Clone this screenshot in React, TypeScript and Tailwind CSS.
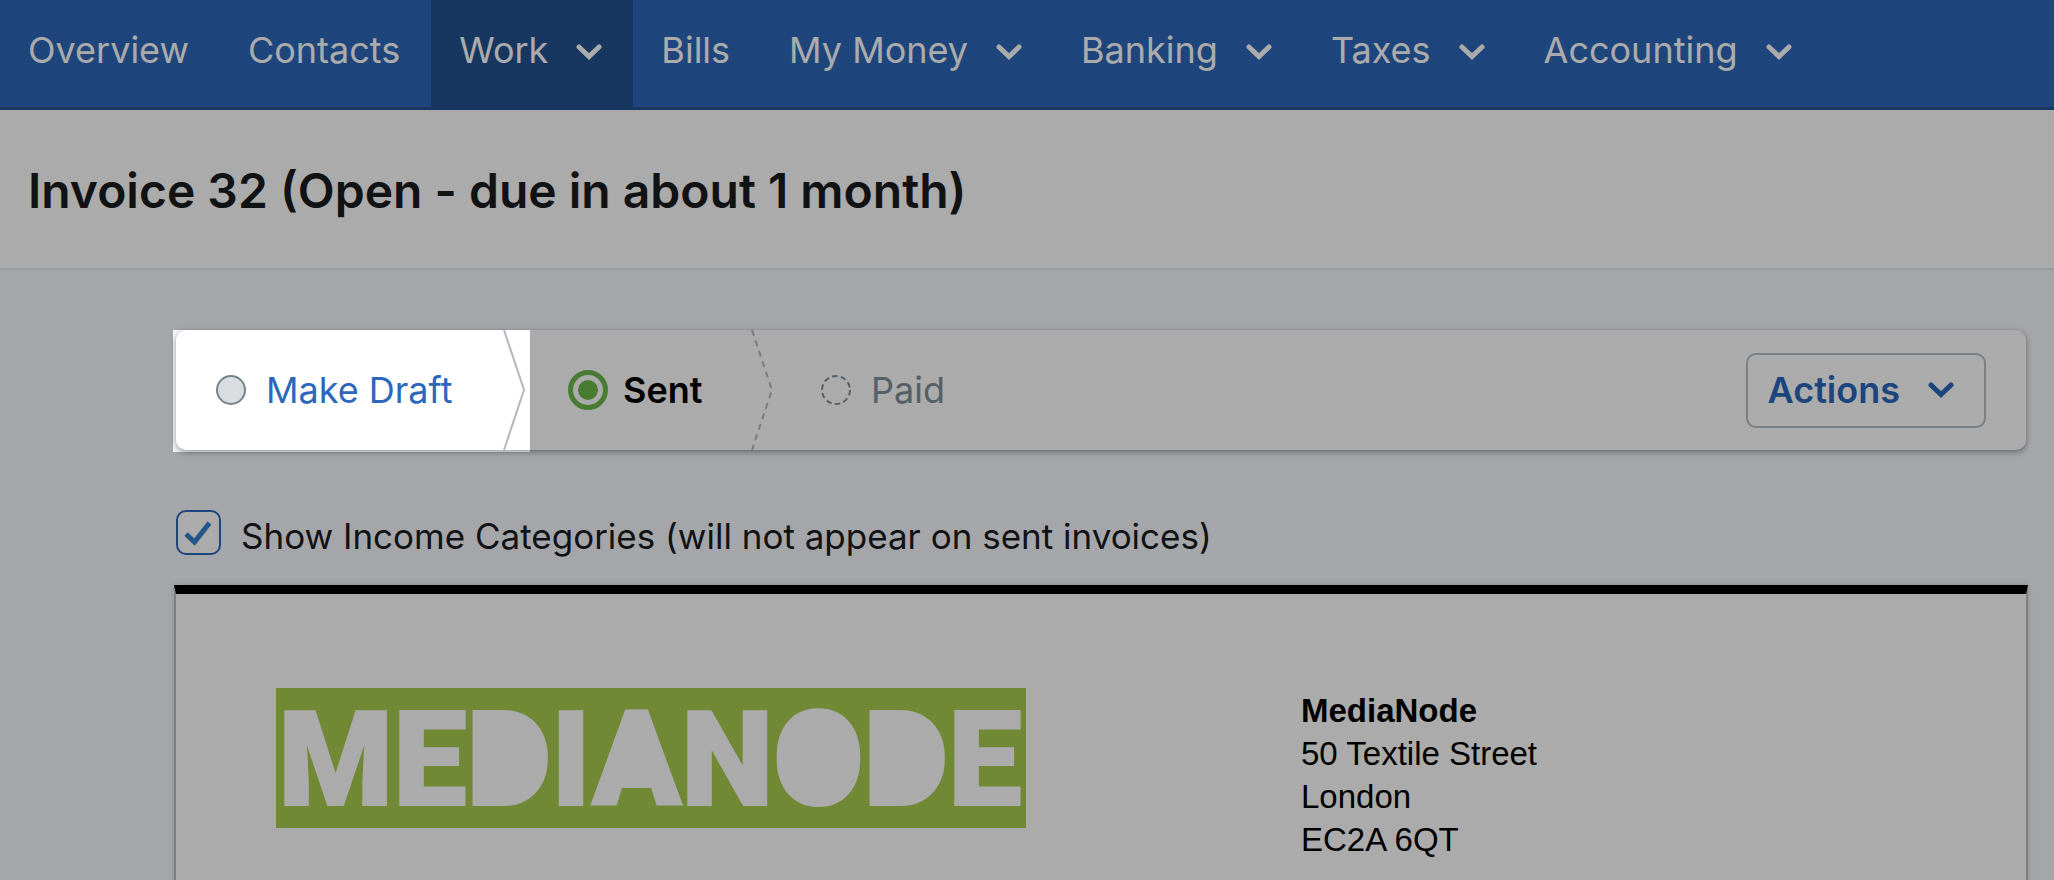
import React, { useState } from 'react';
import clsx from 'clsx';

const navItems = [
  { label: 'Overview' },
  { label: 'Contacts' },
  { label: 'Work', menu: true, active: true },
  { label: 'Bills' },
  { label: 'My Money', menu: true },
  { label: 'Banking', menu: true },
  { label: 'Taxes', menu: true },
  { label: 'Accounting', menu: true },
];

const address = ['50 Textile Street', 'London', 'EC2A 6QT'];

const Chevron: React.FC = () => (
  <svg width="26" height="16" viewBox="0 0 26 16" fill="none" aria-hidden="true">
    <path d="M3 3l10 9.5L23 3" stroke="currentColor" strokeWidth="5" strokeLinecap="round" />
  </svg>
);

const Divider: React.FC<{ dashed?: boolean }> = ({ dashed }) => (
  <svg width="22" height="120" viewBox="0 0 22 120" fill="none" aria-hidden="true">
    <path
      d="M1 0l20 60L1 120"
      stroke="#b3b9bd"
      strokeWidth="2"
      strokeDasharray={dashed ? '6 5' : undefined}
    />
  </svg>
);

const NavBar: React.FC = () => (
  <nav className="flex h-[110px] border-b-[3px] border-[#24528f] bg-[#2d67b9] text-white">
    {navItems.map((item) => (
      <a
        key={item.label}
        href="#"
        className={clsx('flex items-start gap-7 pl-7 pr-[31px] pt-[27px] leading-[46px]', item.active && 'bg-[#24528f]')}
      >
        {item.label}
        {item.menu && (
          <span className="flex h-[50px] items-center">
            <Chevron />
          </span>
        )}
      </a>
    ))}
  </nav>
);

const StatusBar: React.FC = () => (
  <div className="ml-[3px] mr-[2px] flex h-[120px] items-center rounded-[10px] bg-white shadow-[0_2px_6px_rgba(0,0,0,0.4)]">
    <div className="relative flex h-full w-[354px] items-center justify-between pl-10 pr-[5px]">
      <button className="flex items-center gap-5 text-[#2c67bb]">
        <svg width="30" height="30" viewBox="0 0 30 30" aria-hidden="true">
          <circle cx="15" cy="15" r="14" fill="#d9dde0" stroke="#75838a" strokeWidth="2" />
        </svg>
        Make Draft
      </button>
      <Divider />
      {/* Spotlight on the first step, its shadow dims the rest of the page */}
      <div className="pointer-events-none absolute -bottom-[2px] -left-[3px] right-0 top-0 z-10 shadow-[0_0_0_3000px_rgba(0,0,0,0.33)]" />
    </div>
    <div className="flex h-full w-[243px] items-center justify-between pl-[38px]">
      <div className="flex items-center gap-[15px] font-semibold text-black">
        <svg width="40" height="40" viewBox="0 0 40 40" aria-hidden="true">
          <circle cx="20" cy="20" r="17.5" fill="none" stroke="#6eb94c" strokeWidth="5" />
          <circle cx="20" cy="20" r="10" fill="#6eb94c" />
        </svg>
        Sent
      </div>
      <Divider dashed />
    </div>
    <div className="flex items-center gap-5 pl-12 text-[#7f8f98]">
      <svg width="30" height="30" viewBox="0 0 30 30" aria-hidden="true">
        <circle cx="15" cy="15" r="14" fill="none" stroke="currentColor" strokeWidth="2" strokeDasharray="5.5 3.3" />
      </svg>
      Paid
    </div>
    <button className="ml-auto mr-10 flex h-[75px] items-center gap-7 rounded-[10px] border-2 border-[#b6bfc4] pl-5 pr-[30px] font-semibold text-[#2c67bb]">
      Actions
      <Chevron />
    </button>
  </div>
);

const Logo: React.FC = () => (
  <svg width="750" height="140" viewBox="0 0 750 140" className="shrink-0 overflow-visible bg-[#a9cb4f]">
    <text
      x="374"
      y="117"
      textAnchor="middle"
      fill="#fff"
      stroke="#fff"
      strokeWidth="2"
      className="font-[Roboto,sans-serif] text-[131px] font-black"
    >
      MEDIANODE
    </text>
    {/* Solid centres of the D, A, O and D */}
    <g fill="#fff">
      <rect x="213" y="38" width="40" height="65" rx="14" />
      <ellipse cx="362" cy="70" rx="12" ry="24" />
      <rect x="521" y="36" width="40" height="70" rx="18" />
      <rect x="609" y="38" width="40" height="65" rx="14" />
    </g>
  </svg>
);

const Invoice: React.FC = () => (
  <section className="ml-px flex h-[400px] border-2 border-t-[9px] border-[#b9bfc4] border-t-black bg-white pl-[100px] pt-[94px] font-['Liberation_Sans',sans-serif] text-[33px] leading-[43px] text-black shadow-[0_0_6px_rgba(0,0,0,0.15)]">
    <Logo />
    <address className="ml-[275px] pt-px not-italic">
      <strong className="block">MediaNode</strong>
      {address.map((line) => (
        <span key={line} className="block">{line}</span>
      ))}
    </address>
  </section>
);

const App: React.FC = () => {
  const [showCategories, setShowCategories] = useState(true);

  return (
    <div className="h-screen overflow-hidden bg-[#f6f8fe] font-[Inter,sans-serif] text-[36px] text-[#1a1b1e]">
      <NavBar />
      <header className="flex h-[160px] items-center border-b-2 border-[#e5e8ea] bg-white px-7 pt-1">
        <h1 className="text-[48px] font-semibold">Invoice 32 (Open - due in about 1 month)</h1>
      </header>
      <main className="pl-[173px] pr-[26px] pt-[60px]">
        <StatusBar />
        <label className="ml-[3px] flex h-[135px] items-center gap-5 pt-[30px]">
          <span className="relative flex">
            <input
              type="checkbox"
              checked={showCategories}
              onChange={(e) => setShowCategories(e.target.checked)}
              className="size-[45px] appearance-none rounded-[10px] border-2 border-[#2c67bb] bg-white"
            />
            {showCategories && (
              <svg className="pointer-events-none absolute inset-0" width="45" height="45" viewBox="0 0 45 45" fill="none" aria-hidden="true">
                <path d="M10 24l8.500 8L33.500 13" stroke="#347fcd" strokeWidth="5" />
              </svg>
            )}
          </span>
          <span className="pt-2 text-[35px]">Show Income Categories (will not appear on sent invoices)</span>
        </label>
        <Invoice />
      </main>
    </div>
  );
};

export default App;
